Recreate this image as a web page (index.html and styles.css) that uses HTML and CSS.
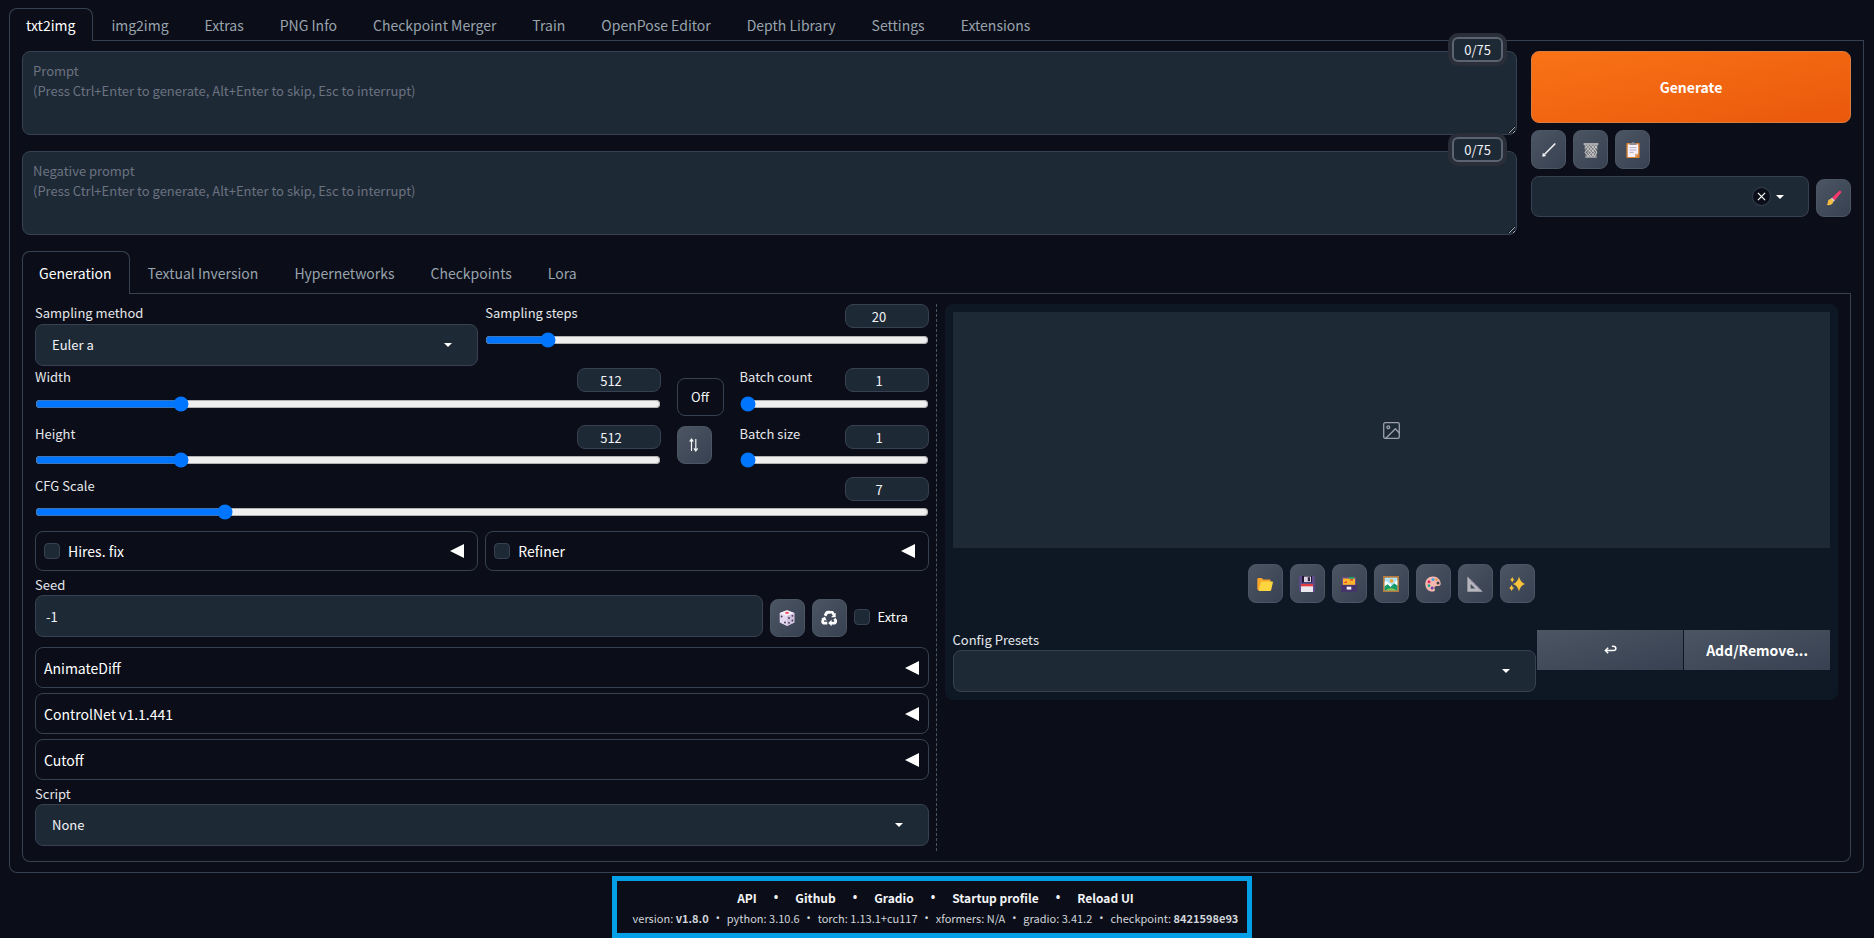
FILE: index.html
```html
<!DOCTYPE html>
<html lang="en">
<head>
<meta charset="utf-8">
<title>Stable Diffusion</title>
<link rel="stylesheet" href="styles.css">
</head>
<body>
<main>
  <nav class="tabs">
    <button class="tab active">txt2img</button>
    <button class="tab">img2img</button>
    <button class="tab">Extras</button>
    <button class="tab">PNG Info</button>
    <button class="tab">Checkpoint Merger</button>
    <button class="tab">Train</button>
    <button class="tab">OpenPose Editor</button>
    <button class="tab">Depth Library</button>
    <button class="tab">Settings</button>
    <button class="tab">Extensions</button>
  </nav>
  <div class="panel">
    <section class="top">
      <div class="prompts">
        <div class="prompt">
          <textarea aria-label="Prompt" placeholder="Prompt&#10;(Press Ctrl+Enter to generate, Alt+Enter to skip, Esc to interrupt)"></textarea>
          <span class="counter">0/75</span>
        </div>
        <div class="prompt">
          <textarea aria-label="Negative prompt" placeholder="Negative prompt&#10;(Press Ctrl+Enter to generate, Alt+Enter to skip, Esc to interrupt)"></textarea>
          <span class="counter">0/75</span>
        </div>
      </div>
      <div class="actions">
        <button class="generate">Generate</button>
        <div class="tools">
          <button class="tool" aria-label="Read parameters">
            <svg viewBox="0 0 16 16"><path d="M14.3 1.4 3.4 12.600" stroke="#f4f6f8" stroke-width="1.500" fill="none"/><path d="M1.300 14.700 1.800 10.800 5.200 14z" fill="#f4f6f8"/></svg>
          </button>
          <button class="tool" aria-label="Clear prompt">
            <svg viewBox="0 0 16 16"><path d="M.6 1h14.8v2H.6z" fill="#a9a9ab"/><path d="M1.3 3h13.4l-1.2 12.3h-11z" fill="#77797d"/><path d="M2 3.2l3 3.6-3 3.6 4 4.6M5 3.2l3.2 3.6L5 10.6l3.6 4.2M8.4 3.2l3 3.6-3 3.8 3 4M11.6 3.2l2.6 3.2M4.6 3.2 2 6.6M8 3.2 4.8 6.8l3.4 3.8-3.4 4M11.4 3.2 8.2 6.8l3.2 3.8-3 4M14 3.4l-2.6 3.4 2.4 3.4-2.2 4" stroke="#d4d4d6" stroke-width=".9" fill="none"/><path d="M2.2 14.6h11.6v1H2.2z" fill="#bcbcbe"/></svg>
          </button>
          <button class="tool" aria-label="Apply styles">
            <svg viewBox="0 0 16 16"><rect x="1.4" y="1" width="13.2" height="15" rx="1" fill="#d9863a"/><path d="M2.8 2.6h10.4v9.2L10 15H2.8z" fill="#f5f0fa"/><path d="M13.2 11.8 10 15v-3.2z" fill="#e2a97d"/><path d="M5 2V1h2c0-1.4 2-1.4 2 0h2v2H5z" fill="#8f8b95"/><path d="M4.6 5.6h6.8M4.6 8h6.8M4.6 10.4h4" stroke="#a79db0" stroke-width=".8"/></svg>
          </button>
        </div>
        <div class="styles-row">
          <div class="select styles">
            <select aria-label="Styles"><option></option></select>
            <span class="marks">
              <button class="clear" aria-label="Clear styles"><svg viewBox="0 0 10 10"><path d="M1 1l8 8M9 1 1 9" stroke="#fff" stroke-width="1.3"/></svg></button>
              <svg class="caret" viewBox="0 0 8 4"><path d="M0 0h8L4 4z" fill="#fff"/></svg>
            </span>
          </div>
          <button class="tool" aria-label="Edit styles">
            <svg viewBox="0 0 16 16"><path d="M13.4.8c1.200-.5 2.300.6 1.800 1.800L8.800 10.400 6 7.700z" fill="#f8396b"/><path d="M6 7.700l2.800 2.700-1.500 1.400-2.800-2.800z" fill="#d9dbe4"/><path d="M4.500 9c1.600.1 2.700 1.300 2.800 2.800-.2 3-3.800 3.700-6.700 3.200 1.700-1.200.9-2.600 1.500-4.200C2.600 9.800 3.400 9.100 4.500 9z" fill="#f6bd43"/></svg>
          </button>
        </div>
      </div>
    </section>

    <nav class="tabs sub">
      <button class="tab active">Generation</button>
      <button class="tab">Textual Inversion</button>
      <button class="tab">Hypernetworks</button>
      <button class="tab">Checkpoints</button>
      <button class="tab">Lora</button>
    </nav>
    <div class="panel workspace">
      <section class="settings">
        <div class="pair">
          <div class="field sampler">
            <label for="sampler">Sampling method</label>
            <div class="select">
              <select id="sampler"><option>Euler a</option></select>
              <svg class="caret" viewBox="0 0 8 4"><path d="M0 0h8L4 4z" fill="#fff"/></svg>
            </div>
          </div>
          <div class="slider">
            <div class="head"><label for="steps">Sampling steps</label><input type="number" aria-label="Sampling steps value" value="20"></div>
            <input type="range" id="steps" min="1" max="150" value="20">
          </div>
        </div>

        <div class="size">
          <div class="stack">
            <div class="slider">
              <div class="head"><label for="width">Width</label><input type="number" aria-label="Width value" value="512"></div>
              <input type="range" id="width" min="64" max="2048" value="512">
            </div>
            <div class="slider tight">
              <div class="head"><label for="height">Height</label><input type="number" aria-label="Height value" value="512"></div>
              <input type="range" id="height" min="64" max="2048" value="512">
            </div>
          </div>
          <div class="ratio">
            <button class="off">Off</button>
            <button class="tool" aria-label="Switch width and height">
              <svg viewBox="0 0 16 16"><path d="M5.500 14V2.500M3.700 4.600 5.500 2l1.800 2.600M9.800 2v11.500M8 11.400l1.800 2.600 1.800-2.600" stroke="#f3f6f4" stroke-width="1.200" fill="none"/></svg>
            </button>
          </div>
          <div class="stack">
            <div class="slider">
              <div class="head"><label for="count">Batch count</label><input type="number" aria-label="Batch count value" value="1"></div>
              <input type="range" id="count" min="1" max="100" value="1">
            </div>
            <div class="slider tight">
              <div class="head"><label for="batch">Batch size</label><input type="number" aria-label="Batch size value" value="1"></div>
              <input type="range" id="batch" min="1" max="8" value="1">
            </div>
          </div>
        </div>

        <div class="slider tight cfg">
          <div class="head"><label for="cfg">CFG Scale</label><input type="number" aria-label="CFG Scale value" value="7"></div>
          <input type="range" id="cfg" min="1" max="30" value="7">
        </div>

        <div class="pair">
          <div class="accordion">
            <label class="check"><input type="checkbox">Hires. fix</label>
            <button aria-label="Expand Hires. fix"><svg viewBox="0 0 14 14"><path d="M14 0v14L0 7z" fill="#fff"/></svg></button>
          </div>
          <div class="accordion">
            <label class="check"><input type="checkbox">Refiner</label>
            <button aria-label="Expand Refiner"><svg viewBox="0 0 14 14"><path d="M14 0v14L0 7z" fill="#fff"/></svg></button>
          </div>
        </div>

        <div class="seed">
          <div class="field">
            <label for="seed">Seed</label>
            <input type="text" id="seed" value="-1">
          </div>
          <button class="tool" aria-label="Random seed">
            <svg viewBox="0 0 16 16"><path d="M8 .2 15.300 3v9.500L8 15.900.7 12.500V3z" fill="#e3d8ee"/><path d="M8 .2 15.300 3 8 6 .7 3z" fill="#f6effa"/><path d="M8 6l7.300-3v9.500L8 15.900z" fill="#cfc0dc"/><ellipse cx="8" cy="2.900" rx="2" ry="1.100" fill="#f0566c"/><g fill="#44355b"><circle cx="2.600" cy="6.500" r=".9"/><circle cx="6" cy="12.500" r=".9"/><circle cx="10" cy="12.800" r=".9"/><circle cx="13.400" cy="5.800" r=".9"/><circle cx="13.400" cy="10.500" r=".9"/><circle cx="10" cy="8" r=".9"/></g></svg>
          </button>
          <button class="tool" aria-label="Reuse seed">
            <svg viewBox="0 0 16 16"><path d="M4 5.700 5.700 2.800Q6.100 2.200 7 2.200H9.300" fill="none" stroke="#fff" stroke-width="3"/><path d="M8.700 2.200h2.600l1.600 2.600" fill="none" stroke="#fff" stroke-width="2.600"/><path d="M14.700 2.700v4.600H10z" fill="#fff"/><path d="M13.600 8.700l1 1.900q.5 1.200-.7 2.200-.5.400-1.200.4H10" fill="none" stroke="#fff" stroke-width="2.800"/><path d="M10.600 9.800v6.400L7.200 13z" fill="#fff"/><path d="M6.300 13.200H3.600q-1.800 0-2-1.600 0-.7.300-1.200l.8-1.500" fill="none" stroke="#fff" stroke-width="2.800"/><path d="M.2 8.600 4 6.800l1.700 4z" fill="#fff"/></svg>
          </button>
          <label class="check extra"><input type="checkbox">Extra</label>
        </div>

        <div class="list">
          <div class="accordion">
            <span>AnimateDiff</span>
            <button aria-label="Expand AnimateDiff"><svg viewBox="0 0 14 14"><path d="M14 0v14L0 7z" fill="#fff"/></svg></button>
          </div>
          <div class="accordion">
            <span>ControlNet v1.1.441</span>
            <button aria-label="Expand ControlNet"><svg viewBox="0 0 14 14"><path d="M14 0v14L0 7z" fill="#fff"/></svg></button>
          </div>
          <div class="accordion">
            <span>Cutoff</span>
            <button aria-label="Expand Cutoff"><svg viewBox="0 0 14 14"><path d="M14 0v14L0 7z" fill="#fff"/></svg></button>
          </div>
        </div>

        <div class="field script">
          <label for="script">Script</label>
          <div class="select">
            <select id="script"><option>None</option></select>
            <svg class="caret" viewBox="0 0 8 4"><path d="M0 0h8L4 4z" fill="#fff"/></svg>
          </div>
        </div>
      </section>

      <div class="divider"></div>

      <section class="results">
        <div class="gallery">
          <svg viewBox="0 0 24 24" fill="none" stroke="#9ca3af" stroke-width="1.800" stroke-linecap="round" stroke-linejoin="round"><rect x="1" y="1" width="22" height="22" rx="2"/><circle cx="7.500" cy="7.500" r="2"/><path d="M23 15.500l-5.500-6L4 23"/></svg>
        </div>
        <div class="tools center">
          <button class="tool" aria-label="Open folder">
            <svg viewBox="0 0 16 16"><path d="M.3 3q0-1 1-1h3.400l1.500 1.600h6.300q1 0 1 1V14H1.300q-1 0-1-1z" fill="#f9a42b"/><path d="M4 5.600h11.200q.9 0 .7.900l-1.800 7.800q-.2.700-1 .7H1.500z" fill="#fcd53f"/></svg>
          </button>
          <button class="tool" aria-label="Save image">
            <svg viewBox="0 0 16 16"><path d="M.2 0h15.600v16H1.600L.2 14.600z" fill="#5d4a8b"/><path d="M3 0h10v6.500H3z" fill="#21182f"/><path d="M5 .6h7v5.500H5z" fill="#d9d2e2"/><path d="M8.800 1.200h2.200v4H8.800z" fill="#2c2140"/><path d="M2 8h12v8H2z" fill="#ece8ef"/><path d="M2 8h12v2.300H2z" fill="#e23c40"/></svg>
          </button>
          <button class="tool" aria-label="Save zip">
            <svg viewBox="0 0 16 16"><path d="M1 1h14v8H1z" fill="#6c4d86"/><path d="M2 2.500h12v6.300H2z" fill="#fdb52c"/><path d="M3 6.200l3-1.200v2H3zM9 3.600l3-.8v2H9z" fill="#e45433"/><path d="M8 1h5v1.800H8z" fill="#21a366"/><path d="M.2 9h15.600v6.800H.2z" fill="#45336e"/><path d="M5.700 10.700h4.600v2.900H5.700z" fill="#f4effa"/></svg>
          </button>
          <button class="tool" aria-label="Send to img2img">
            <svg viewBox="0 0 16 16"><path d="M0 0h16v16H0z" fill="#b5793e"/><path d="M1.700 1.700h12.600v12.600H1.700z" fill="#aee0f7"/><circle cx="8.600" cy="4.800" r="1.900" fill="#eda339"/><path d="M1.700 5.500q2-1 3 .8t3.400 1.200V11H1.700zM14.300 4v5l-4-1z" fill="#fff"/><path d="M1.700 14.300v-4l3-2 3 2.600 3.600-3.600 3 2.400v4.600z" fill="#159a68"/><path d="M2.500 14.300q5.500-4 11 0z" fill="#8cc84b"/></svg>
          </button>
          <button class="tool" aria-label="Send to inpaint">
            <svg viewBox="0 0 16 16"><path d="M8.300.5C3.500.3.3 3.800.3 8c0 4.500 3.300 7.600 7 7.600 2.400 0 3.200-1.300 2.400-2.700-.8-1.500.1-2.900 1.800-2.900h2.200c1.400 0 2-1 2-2.200C15.700 3.700 12.500.6 8.300.5z" fill="#f6b7ae"/><circle cx="13" cy="7" r="1.500" fill="#3c404a"/><circle cx="8" cy="3.400" r="1.500" fill="#46a5e5"/><circle cx="11.300" cy="3.700" r="1.100" fill="#f78d2b"/><circle cx="4" cy="5.800" r="1.500" fill="#e4295b"/><circle cx="4" cy="9.700" r="1.400" fill="#1fa98b"/><circle cx="7.200" cy="12" r="1.500" fill="#6b3fb0"/></svg>
          </button>
          <button class="tool" aria-label="Send to extras">
            <svg viewBox="0 0 16 16"><path d="M.4.500 15.700 15.700H.4z" fill="#b6b6bc"/><path d="M3.600 8v4.500h4.600z" fill="#434d5b"/><path d="M3 3.300 13.400 13.800" stroke="#8b80a5" stroke-width="1.300" stroke-dasharray="1 1"/></svg>
          </button>
          <button class="tool" aria-label="Upscale">
            <svg viewBox="0 0 16 16" fill="#fbc23c"><path d="M10 .6Q11.400 6.700 16 8 11.400 9.400 10 15.600 8.600 9.400 4 8 8.600 6.700 10 .6z"/><path d="M3.200.8Q3.800 3.100 5.300 3.700 3.800 4.300 3.200 6.600 2.600 4.300 1.200 3.700 2.600 3.100 3.200.8zM2.600 8.800Q3.300 11.300 5 11.900 3.300 12.600 2.600 15 1.900 12.600.2 11.900 1.900 11.300 2.600 8.800z"/></svg>
          </button>
        </div>
        <div class="presets">
          <div class="field">
            <label for="preset">Config Presets</label>
            <div class="select">
              <select id="preset"><option></option></select>
              <svg class="caret" viewBox="0 0 8 4"><path d="M0 0h8L4 4z" fill="#fff"/></svg>
            </div>
          </div>
          <button class="flat" aria-label="Reset preset">
            <svg viewBox="0 0 14 10"><path d="M4.500 2.500 1.500 5.500l3 3M1.500 5.500H10q2.800 0 2.800-2.200T10 1H8.500" fill="none" stroke="#fff" stroke-width="1.600"/></svg>
          </button>
          <button class="flat">Add/Remove...</button>
        </div>
      </section>
    </div>
  </div>
</main>
<footer>
  <div class="links">
    <a href="#api">API</a><span class="dot">•</span><a href="#github">Github</a><span class="dot">•</span><a href="#gradio">Gradio</a><span class="dot">•</span><a href="#profile">Startup profile</a><span class="dot">•</span><a href="#reload">Reload UI</a>
  </div>
  <div class="versions">
    <span>version: <b>v1.8.0</b></span><span class="dot">•</span><span>python: 3.10.6</span><span class="dot">•</span><span>torch: 1.13.1+cu117</span><span class="dot">•</span><span>xformers: N/A</span><span class="dot">•</span><span>gradio: 3.41.2</span><span class="dot">•</span><span>checkpoint: <b>8421598e93</b></span>
  </div>
</footer>
</body>
</html>
```

FILE: styles.css
```css
:root {
  --bg: #0b0e18;
  --line: #374151;
  --input: #1e2936;
  --text: #f3f4f6;
  --muted: #98a3ad;
}

* { box-sizing: border-box; }

body {
  margin: 0;
  padding: 8px 10px 0 9px;
  background: var(--bg);
  color: var(--text);
  font-family: "Noto Sans CJK SC", "Noto Sans", sans-serif;
  font-size: 14px;
  line-height: 20px;
}

button, input, select, textarea {
  margin: 0;
  font: inherit;
  color: inherit;
}

button { padding: 0; border: 0; background: none; }

svg { display: block; }

/* Tabs */
.tabs {
  display: flex;
  gap: 1px;
  height: 33px;
  border-bottom: 1px solid var(--line);
}

.tabs.sub { height: 43px; margin-top: 16px; }

.tab {
  margin-bottom: -1px;
  padding: 0 17px 0 16px;
  border: 1px solid transparent;
  border-bottom: 0;
  border-radius: 8px 8px 0 0;
  color: var(--muted);
}

.tab.active {
  border-color: var(--line);
  background: var(--bg);
  color: #fff;
}

.panel {
  padding: 10px 12px;
  border: 1px solid var(--line);
  border-top: 0;
  border-radius: 0 0 8px 8px;
}

/* Prompt area */
.top {
  display: grid;
  grid-template-columns: 1fr 320px;
  gap: 14px;
}

.prompts { display: grid; gap: 16px; }

.prompt { position: relative; display: flex; }

textarea {
  width: 100%;
  height: 84px;
  padding: 9px 10px;
  border: 1px solid var(--line);
  border-radius: 8px;
  background: var(--input);
  font-size: 13px;
  resize: vertical;
}

textarea::placeholder { color: #6b7280; }

.counter {
  position: absolute;
  top: -14px;
  right: 14px;
  padding: 0 10px;
  border: 2px solid #5b6470;
  border-radius: 6px;
  background: var(--input);
  box-shadow: 0 0 0 4px #2a2e38;
  font-size: 13px;
  line-height: 21px;
}

.actions {
  display: flex;
  flex-direction: column;
  gap: 7px;
}

.generate {
  height: 72px;
  border: 1px solid #d97c3e;
  border-radius: 8px;
  background: linear-gradient(to bottom right, #f97316, #ea580c);
  color: #fff;
  font-weight: 700;
}

.tools { display: flex; gap: 7px; }

.tools.center { justify-content: center; margin: 16px 0 27px; }

.tool {
  display: grid;
  place-items: center;
  flex: none;
  width: 35px;
  height: 39px;
  border: 1px solid #4b5563;
  border-radius: 8px;
  background: linear-gradient(to bottom right, #4b5563, #374151);
}

.tool svg { width: 16px; height: 16px; }

.styles-row { display: flex; align-items: flex-end; gap: 7px; }

.styles-row .tool, .seed .tool, .ratio .tool { height: 38px; }

/* Selects */
.select { display: grid; align-items: center; }

.select > * { grid-area: 1 / 1; }

.select select {
  appearance: none;
  width: 100%;
  height: 42px;
  padding: 0 16px;
  border: 1px solid var(--line);
  border-radius: 8px;
  background: var(--input);
  font-size: 13px;
}

.caret { width: 8px; height: 4px; }

.select > .caret { justify-self: end; margin-right: 26px; pointer-events: none; }

.styles { flex: 1; }

.styles select { height: 41px; }

.marks {
  display: flex;
  align-items: center;
  justify-self: end;
  gap: 5px;
  margin-right: 25px;
}

.clear {
  display: grid;
  place-items: center;
  width: 19px;
  height: 19px;
  border: 1px solid var(--line);
  border-radius: 50%;
  background: var(--bg);
}

.clear svg { width: 9px; height: 9px; }

/* Settings column */
.workspace {
  display: grid;
  grid-template-columns: 1fr 16px 1fr;
  align-items: start;
}

.settings { min-width: 0; padding-bottom: 5px; }

.divider {
  justify-self: center;
  align-self: stretch;
  border-left: 1px dashed #4b5563;
}

label { display: block; font-size: 13px; color: #e5e7eb; }

.pair { display: grid; grid-template-columns: 1fr 1fr; gap: 7px; }

.slider { display: grid; gap: 4px; align-content: start; }

.slider.tight { gap: 3px; }

.head { display: flex; justify-content: space-between; height: 24px; }

.head label, .sampler label { line-height: 18px; }

.sampler { display: grid; gap: 2px; }

input[type="number"] {
  width: 84px;
  height: 24px;
  padding: 0 5px;
  border: 1px solid var(--line);
  border-radius: 8px;
  background: var(--input);
  font-size: 13px;
  text-align: center;
}

input[type="range"] { width: 100%; height: 16px; }

.size {
  display: grid;
  grid-template-columns: 1fr 47px 189px;
  gap: 16px;
  margin-top: 2px;
}

.stack { display: grid; gap: 13px; }

.ratio {
  display: flex;
  flex-direction: column;
  gap: 10px;
  padding-top: 10px;
}

.off {
  height: 38px;
  border: 1px solid var(--line);
  border-radius: 8px;
  font-size: 13px;
}

.cfg { margin: 9px 0 11px; }

.accordion {
  display: flex;
  align-items: center;
  justify-content: space-between;
  height: 40px;
  padding: 0 13px 0 8px;
  border: 1px solid var(--line);
  border-radius: 8px;
  color: #fff;
}

.accordion svg { width: 14px; height: 14px; }

.list .accordion { height: 41px; padding-right: 9px; }

.check {
  display: flex;
  align-items: center;
  gap: 8px;
  color: #fff;
}

.accordion .check { font-size: 14px; }

input[type="checkbox"] {
  appearance: none;
  width: 16px;
  height: 16px;
  border: 1px solid var(--line);
  border-radius: 4px;
  background: var(--input);
}

.seed {
  display: flex;
  align-items: flex-end;
  gap: 7px;
  margin: 4px 0 10px;
}

.seed .field { flex: 1; }

.extra { width: 75px; height: 40px; }

#seed {
  display: block;
  width: 100%;
  height: 42px;
  padding: 0 10px;
  border: 1px solid var(--line);
  border-radius: 8px;
  background: var(--input);
  font-size: 13px;
}

.list { display: grid; gap: 5px; }

.script { margin-top: 4px; }

/* Results column */
.results {
  padding: 8px;
  border-radius: 8px;
  background: #0e1825;
}

.gallery {
  display: grid;
  place-items: center;
  height: 236px;
  background: var(--input);
}

.gallery svg { width: 17px; height: 17px; }

.presets {
  display: grid;
  grid-template-columns: 4fr 1fr 1fr;
  gap: 1px;
  align-items: start;
}

.flat {
  display: grid;
  place-items: center;
  height: 40px;
  background: linear-gradient(to bottom right, #4b5563, #374151);
  color: #fff;
  font-weight: 700;
}

.flat svg { width: 13px; height: 10px; }

/* Footer */
footer {
  width: 640px;
  height: 62px;
  margin: 3px 0 0 calc(50% - 325px);
  padding: 7px 0 0 8px;
  border: 5px solid #049fe6;
}

.links, .versions {
  display: flex;
  justify-content: center;
  white-space: nowrap;
}

.links { gap: 17px; font-size: 12px; font-weight: 700; }

.links a { color: var(--text); text-decoration: none; }

.versions { gap: 7px; font-size: 11px; color: #d1d5db; }

.dot { font-family: "Noto Sans", sans-serif; }
```
